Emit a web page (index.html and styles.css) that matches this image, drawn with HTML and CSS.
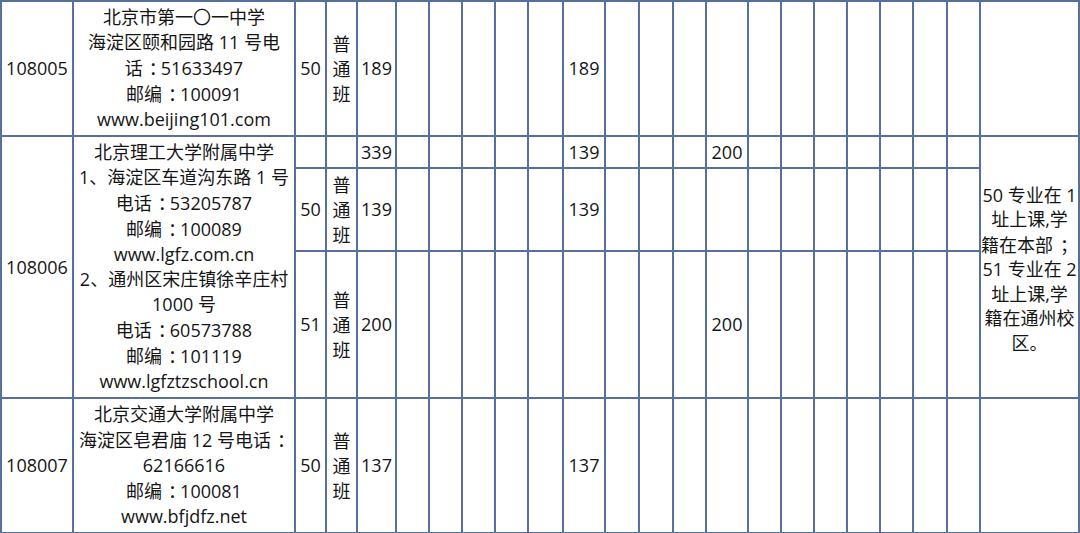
FILE: index.html
```html
<!DOCTYPE html>
<html lang="zh-CN">
<head>
<meta charset="utf-8">
<title>招生计划表</title>
<link rel="stylesheet" href="styles.css">
</head>
<body>
<table class="plan">
  <colgroup>
    <col class="w72"><col class="w222"><col class="w31"><col class="w31"><col class="w39">
    <col class="w33"><col class="w33"><col class="w33"><col class="w33"><col class="w35">
    <col class="w42"><col class="w34"><col class="w34"><col class="w33"><col class="w42">
    <col class="w33"><col class="w33"><col class="w33"><col class="w33"><col class="w33">
    <col class="w34"><col class="w33"><col class="w99">
  </colgroup>
  <tbody>
    <tr class="r1">
      <td class="code">108005</td>
      <td class="school">北京市第一〇一中学<br>海淀区颐和园路 11 号电<br>话<span class="p">：</span>51633497<br>邮编<span class="p">：</span>100091<br>www.beijing101.com</td>
      <td class="num">50</td>
      <td class="type">普<br>通<br>班</td>
      <td class="num">189</td>
      <td></td><td></td><td></td><td></td><td></td>
      <td class="num">189</td>
      <td></td><td></td><td></td><td></td>
      <td></td><td></td><td></td><td></td><td></td><td></td><td></td>
      <td></td>
    </tr>
    <tr class="r2a">
      <td class="code" rowspan="3">108006</td>
      <td class="school" rowspan="3">北京理工大学附属中学<br>1、海淀区车道沟东路 1 号<br>电话<span class="p">：</span>53205787<br>邮编<span class="p">：</span>100089<br>www.lgfz.com.cn<br>2、通州区宋庄镇徐辛庄村<br>1000 号<br>电话<span class="p">：</span>60573788<br>邮编<span class="p">：</span>101119<br>www.lgfztzschool.cn</td>
      <td></td>
      <td></td>
      <td class="num">339</td>
      <td></td><td></td><td></td><td></td><td></td>
      <td class="num">139</td>
      <td></td><td></td><td></td>
      <td class="num">200</td>
      <td></td><td></td><td></td><td></td><td></td><td></td><td></td>
      <td class="note" rowspan="3">50 专业在 1<br>址上课,学<br>籍在本部<span class="p">；</span><br>51 专业在 2<br>址上课,学<br>籍在通州校<br>区。</td>
    </tr>
    <tr class="r2b">
      <td class="num">50</td>
      <td class="type">普<br>通<br>班</td>
      <td class="num">139</td>
      <td></td><td></td><td></td><td></td><td></td>
      <td class="num">139</td>
      <td></td><td></td><td></td><td></td>
      <td></td><td></td><td></td><td></td><td></td><td></td><td></td>
    </tr>
    <tr class="r2c">
      <td class="num">51</td>
      <td class="type">普<br>通<br>班</td>
      <td class="num">200</td>
      <td></td><td></td><td></td><td></td><td></td>
      <td></td>
      <td></td><td></td><td></td>
      <td class="num">200</td>
      <td></td><td></td><td></td><td></td><td></td><td></td><td></td>
    </tr>
    <tr class="r3">
      <td class="code">108007</td>
      <td class="school">北京交通大学附属中学<br>海淀区皂君庙 12 号电话<span class="p">：</span><br>62166616<br>邮编<span class="p">：</span>100081<br>www.bfjdfz.net</td>
      <td class="num">50</td>
      <td class="type">普<br>通<br>班</td>
      <td class="num">137</td>
      <td></td><td></td><td></td><td></td><td></td>
      <td class="num">137</td>
      <td></td><td></td><td></td><td></td>
      <td></td><td></td><td></td><td></td><td></td><td></td><td></td>
      <td></td>
    </tr>
  </tbody>
</table>
</body>
</html>
```
FILE: styles.css
```css
html, body {
  margin: 0;
  padding: 0;
  background: #ffffff;
}

body {
  font-family: "Open Sans", "Noto Sans CJK SC", sans-serif;
  font-size: 18px;
  color: #151515;
}

.plan {
  width: 1080px;
  table-layout: fixed;
  border-collapse: collapse;
}

.plan td {
  border: 2px solid #56709b;
  padding: 0;
  text-align: center;
  vertical-align: middle;
  line-height: 25px;
  white-space: nowrap;
  overflow: hidden;
}

.w72 { width: 72px; }
.w222 { width: 222px; }
.w31 { width: 31px; }
.w39 { width: 39px; }
.w33 { width: 33px; }
.w34 { width: 34px; }
.w35 { width: 35px; }
.w42 { width: 42px; }
.w99 { width: 99px; }

.r1 { height: 135px; }
.r2a { height: 32px; }
.r2b { height: 83px; }
.r2c { height: 147px; }
.r3 { height: 135px; }

.plan td.code {
  text-align: center;
}

.plan td.type {
  font-family: "Noto Sans CJK SC", sans-serif;
}

.plan td.note {
  line-height: 24.5px;
  padding-top: 4px;
}

.p {
  padding-left: 6px;
  letter-spacing: -6px;
  font-family: "Noto Sans CJK SC", sans-serif;
}

.note .p {
  padding-left: 7px;
  letter-spacing: 0;
}
```
